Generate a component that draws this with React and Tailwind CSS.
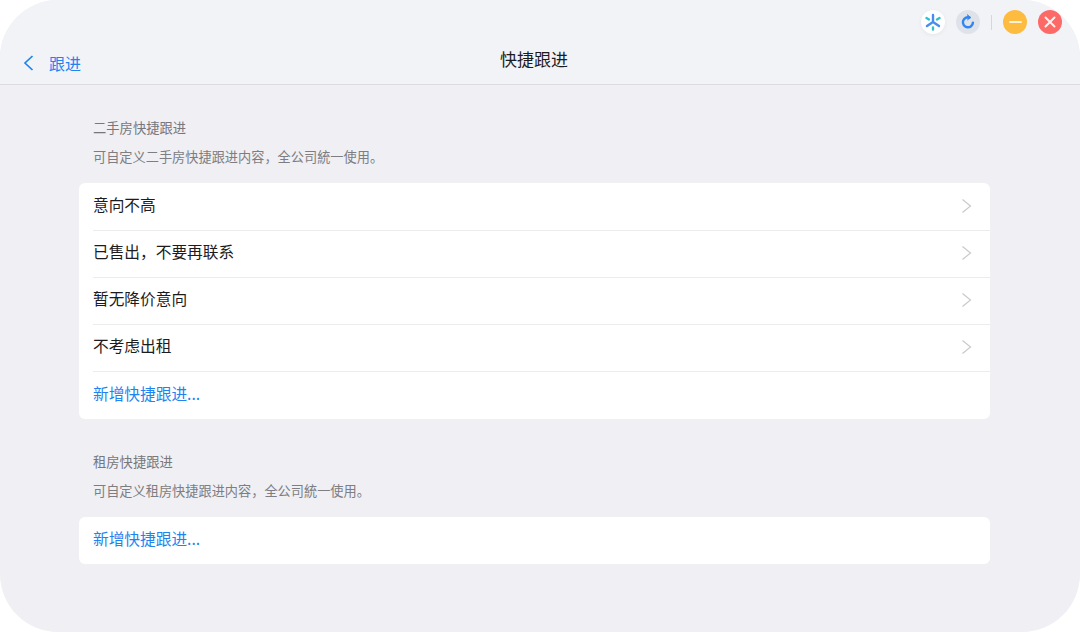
const cjk = '"Noto Sans CJK SC", "Liberation Sans", sans-serif';

const Row = ({ label, link, last }) => (
  <div className="h-[47px] pl-[14px] flex flex-col">
    <div className="flex-1 flex items-center pr-[17px] pb-[2px] justify-between">
      <span className={`mb-[2px] text-[15.7px] leading-none ${link ? 'text-[#1d84f0]' : 'text-[#1c1c1e]'}`}>{label}</span>
      {!link && (
        <svg width="12" height="16" viewBox="0 0 12 16" fill="none" stroke="#c9c9ce" strokeWidth="1.2">
          <path d="M1.5 1.5 L9.5 8 L1.5 14.5" />
        </svg>
      )}
    </div>
    {!last && <div className="h-px bg-[#ececef]" />}
  </div>
);

const Section = ({ title, desc, rows }) => (
  <section>
    <h2 className="pl-[14px] text-[13.3px] leading-4 text-[#77777c] font-normal">{title}</h2>
    <p className="pl-[14px] mt-[13px] text-[13.2px] leading-4 text-[#7d7d82]">{desc}</p>
    <div className={`mt-[18px] bg-white rounded-[6px] ${rows.length > 1 ? 'pt-px' : ''}`}>
      {rows.map((r, i) => (
        <Row key={r.label} label={r.label} link={r.link} last={i === rows.length - 1} />
      ))}
    </div>
  </section>
);

const WindowButtons = () => (
  <div className="absolute top-[10px] right-[18px] flex items-center">
    <div className="w-6 h-6 rounded-full bg-white flex items-center justify-center shadow-[0_1px_4px_rgba(0,0,0,0.06)]">
      <svg width="20" height="20" viewBox="0 0 20 20" fill="none" strokeLinecap="round" strokeWidth="2.4">
        <path d="M10 3 V10 M10 10 L4 14 M10 10 L16 14" stroke="#4a8cf0" />
        <path d="M10 15.5 V17.5 M3.5 6 L6 7.5 M16.5 6 L14 7.5" stroke="#2cc4cc" />
      </svg>
    </div>
    <div className="ml-[11px] w-6 h-6 rounded-full bg-[#dfe2e9] flex items-center justify-center">
      <svg width="16" height="16" viewBox="0 0 16 16" fill="none" stroke="#2f86f0" strokeWidth="2.4" strokeLinecap="round">
        <path d="M9.6 3.6 A5 5 0 1 0 12.9 8.6" />
        <path d="M7.4 0.8 L10.4 3.4 L7.6 5.8" fill="#2f86f0" strokeWidth="1" strokeLinejoin="round" />
      </svg>
    </div>
    <div className="ml-[11px] w-px h-[15px] bg-[#d6d7dc]" />
    <div className="ml-[11px] w-6 h-6 rounded-full bg-[#fdbc40] flex items-center justify-center">
      <div className="w-[13px] h-[2px] bg-[#fff3d6] rounded-full" />
    </div>
    <div className="ml-[11px] w-6 h-6 rounded-full bg-[#fc6a67] flex items-center justify-center">
      <svg width="14" height="14" viewBox="0 0 14 14" stroke="#fff0ee" strokeWidth="2" strokeLinecap="round">
        <path d="M2.5 2.5 L11.5 11.5 M11.5 2.5 L2.5 11.5" />
      </svg>
    </div>
  </div>
);

export default function App() {
  return (
    <div className="w-[1080px] h-[632px] bg-white overflow-hidden" style={{ fontFamily: cjk }}>
      <div className="relative w-full h-full rounded-[58px] bg-[#efeff4] overflow-hidden flex flex-col">
        <header className="h-[85px] shrink-0 bg-[#f2f3f7] border-b border-[#dcdce0] grid grid-cols-[468px_132px_1fr]">
          <div className="flex items-start pt-[53px] pl-[23px] text-[#1d84f0]">
            <svg width="11" height="18" viewBox="0 0 11 18" fill="none" stroke="#1d84f0" strokeWidth="1.7" className="mt-[1px]">
              <path d="M9.5 2 L2 9 L9.5 16" />
            </svg>
            <span className="ml-[15px] text-base leading-[20px]">跟进</span>
          </div>
          <h1 className="pt-[49px] text-[17px] leading-[20px] font-normal text-[#1c1c1e] text-center">快捷跟进</h1>
          <div />
        </header>
        <WindowButtons />
        <main className="pt-[35px] pl-[79px] pr-[90px] flex flex-col gap-[35px]">
          <Section
            title="二手房快捷跟进"
            desc="可自定义二手房快捷跟进内容，全公司統一使用。"
            rows={[
              { label: '意向不高' },
              { label: '已售出，不要再联系' },
              { label: '暂无降价意向' },
              { label: '不考虑出租' },
              { label: '新增快捷跟进...', link: true },
            ]}
          />
          <Section
            title="租房快捷跟进"
            desc="可自定义租房快捷跟进内容，全公司統一使用。"
            rows={[{ label: '新增快捷跟进...', link: true }]}
          />
        </main>
      </div>
    </div>
  );
}
